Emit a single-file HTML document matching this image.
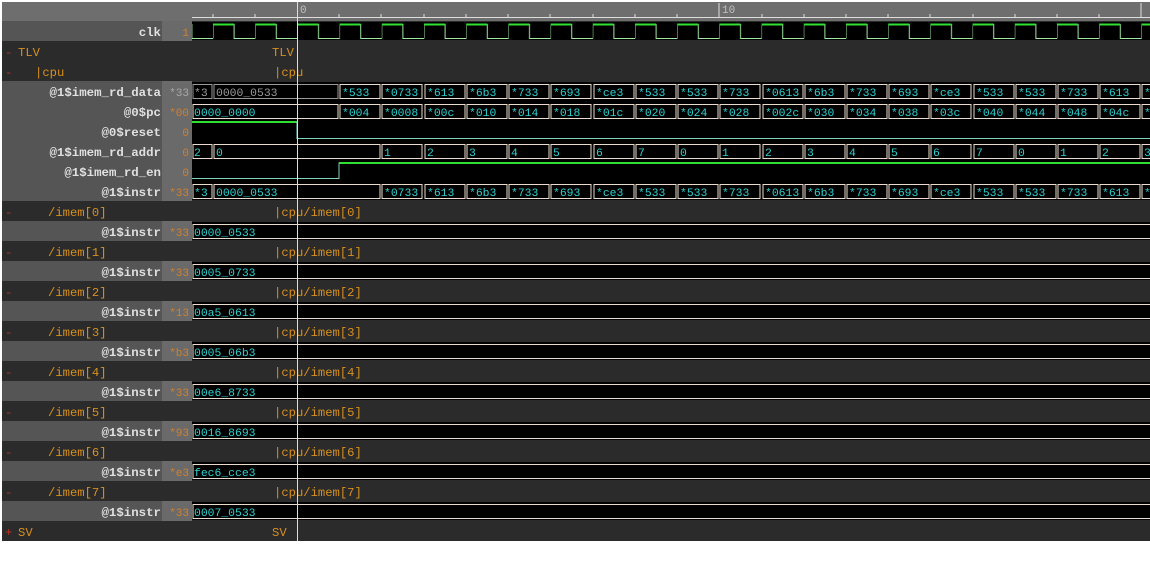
<!DOCTYPE html>
<html><head><meta charset="utf-8"><style>
body{margin:0;background:#fff;width:1150px;height:562px;overflow:hidden}
svg{display:block}
.n{font:bold 12.4px "Liberation Mono",monospace;fill:#e0e0e0;text-anchor:end}
.s{font:12.2px "Liberation Mono",monospace;fill:#d8901c}
.m{fill:#c0c0c0;font:11px "Liberation Mono",monospace}
.v{font:11px "Liberation Mono",monospace;fill:#d08030;text-anchor:end}
.t{font:11.4px "Liberation Mono",monospace;fill:#30d0d0}
.b rect{fill:none;stroke:#eadccc;stroke-width:1}
</style></head><body>
<svg width="1150" height="562" viewBox="0 0 1150 562" xmlns="http://www.w3.org/2000/svg">
<defs>
<pattern id="clk" x="213" y="21" width="42.2" height="20" patternUnits="userSpaceOnUse">
<path d="M0,17.5V3.5H21.1V17.5H42.2" fill="none" stroke="#a0e8a0" stroke-width="1"/>
<path d="M0,3.5H21.1" stroke="#30e030" stroke-width="2"/>
</pattern>
</defs>
<rect x="2" y="2" width="1148" height="539" fill="#2b2b2b"/>
<rect x="2" y="2" width="1148" height="19" fill="#6e6e6e"/>
<line x1="192" y1="17.5" x2="1150" y2="17.5" stroke="#ddd"/>
<g stroke="#ddd">
<line x1="213" y1="14" x2="213" y2="17"/><line x1="255" y1="14" x2="255" y2="17"/><line x1="339" y1="14" x2="339" y2="17"/><line x1="381" y1="14" x2="381" y2="17"/><line x1="424" y1="14" x2="424" y2="17"/><line x1="466" y1="14" x2="466" y2="17"/><line x1="508" y1="14" x2="508" y2="17"/><line x1="550" y1="14" x2="550" y2="17"/><line x1="593" y1="14" x2="593" y2="17"/><line x1="635" y1="14" x2="635" y2="17"/><line x1="677" y1="14" x2="677" y2="17"/><line x1="719" y1="3" x2="719" y2="17"/><line x1="762" y1="14" x2="762" y2="17"/><line x1="804" y1="14" x2="804" y2="17"/><line x1="846" y1="14" x2="846" y2="17"/><line x1="888" y1="14" x2="888" y2="17"/><line x1="930" y1="14" x2="930" y2="17"/><line x1="973" y1="14" x2="973" y2="17"/><line x1="1015" y1="14" x2="1015" y2="17"/><line x1="1057" y1="14" x2="1057" y2="17"/><line x1="1099" y1="14" x2="1099" y2="17"/><line x1="1141" y1="3" x2="1141" y2="17"/>
</g>
<text x="300" y="13" class="m">0</text><text x="722" y="13" class="m">10</text>
<g fill="#555">
<rect x="2" y="21" width="160" height="20"/><rect x="2" y="81" width="160" height="120"/>
<rect x="2" y="221" width="160" height="20"/><rect x="2" y="261" width="160" height="20"/><rect x="2" y="301" width="160" height="20"/><rect x="2" y="341" width="160" height="20"/><rect x="2" y="381" width="160" height="20"/><rect x="2" y="421" width="160" height="20"/><rect x="2" y="461" width="160" height="20"/><rect x="2" y="501" width="160" height="20"/>
</g>
<g fill="#6a6a6a">
<rect x="162" y="21" width="30" height="20"/><rect x="162" y="81" width="30" height="120"/>
<rect x="162" y="221" width="30" height="20"/><rect x="162" y="261" width="30" height="20"/><rect x="162" y="301" width="30" height="20"/><rect x="162" y="341" width="30" height="20"/><rect x="162" y="381" width="30" height="20"/><rect x="162" y="421" width="30" height="20"/><rect x="162" y="461" width="30" height="20"/><rect x="162" y="501" width="30" height="20"/>
</g>
<g fill="#000">
<rect x="192" y="22" width="958" height="18"/><rect x="192" y="82" width="958" height="118"/>
<rect x="192" y="222" width="958" height="18"/><rect x="192" y="262" width="958" height="18"/><rect x="192" y="302" width="958" height="18"/><rect x="192" y="342" width="958" height="18"/><rect x="192" y="382" width="958" height="18"/><rect x="192" y="422" width="958" height="18"/><rect x="192" y="462" width="958" height="18"/><rect x="192" y="502" width="958" height="18"/>
</g>
<text x="161" y="36" class="n">clk</text>
<text x="161" y="96" class="n">@1$imem_rd_data</text>
<text x="161" y="116" class="n">@0$pc</text>
<text x="161" y="136" class="n">@0$reset</text>
<text x="161" y="156" class="n">@1$imem_rd_addr</text>
<text x="161" y="176" class="n">@1$imem_rd_en</text>
<text x="161" y="196" class="n">@1$instr</text>
<text x="161" y="236" class="n">@1$instr</text><text x="161" y="276" class="n">@1$instr</text><text x="161" y="316" class="n">@1$instr</text><text x="161" y="356" class="n">@1$instr</text><text x="161" y="396" class="n">@1$instr</text><text x="161" y="436" class="n">@1$instr</text><text x="161" y="476" class="n">@1$instr</text><text x="161" y="516" class="n">@1$instr</text>
<text x="189" y="36" class="v">1</text><text x="189" y="96" class="v" fill="#aaa" style="fill:#a8a8a8">*33</text><text x="189" y="116" class="v">*00</text><text x="189" y="136" class="v">0</text><text x="189" y="156" class="v">0</text><text x="189" y="176" class="v">0</text><text x="189" y="196" class="v">*33</text>
<text x="189" y="236" class="v">*33</text><text x="189" y="276" class="v">*33</text><text x="189" y="316" class="v">*13</text><text x="189" y="356" class="v">*b3</text><text x="189" y="396" class="v">*33</text><text x="189" y="436" class="v">*93</text><text x="189" y="476" class="v">*e3</text><text x="189" y="516" class="v">*33</text>
<g class="s">
<text x="5" y="56" fill="#c03020">-</text><text x="18" y="56">TLV</text><text x="272" y="56">TLV</text>
<text x="5" y="76" fill="#c03020">-</text><text x="35" y="76">|cpu</text><text x="274" y="76">|cpu</text>
<text x="5" y="216" fill="#c03020">-</text><text x="48" y="216">/imem[0]</text><text x="274" y="216">|cpu/imem[0]</text>
<text x="5" y="256" fill="#c03020">-</text><text x="48" y="256">/imem[1]</text><text x="274" y="256">|cpu/imem[1]</text>
<text x="5" y="296" fill="#c03020">-</text><text x="48" y="296">/imem[2]</text><text x="274" y="296">|cpu/imem[2]</text>
<text x="5" y="336" fill="#c03020">-</text><text x="48" y="336">/imem[3]</text><text x="274" y="336">|cpu/imem[3]</text>
<text x="5" y="376" fill="#c03020">-</text><text x="48" y="376">/imem[4]</text><text x="274" y="376">|cpu/imem[4]</text>
<text x="5" y="416" fill="#c03020">-</text><text x="48" y="416">/imem[5]</text><text x="274" y="416">|cpu/imem[5]</text>
<text x="5" y="456" fill="#c03020">-</text><text x="48" y="456">/imem[6]</text><text x="274" y="456">|cpu/imem[6]</text>
<text x="5" y="496" fill="#c03020">-</text><text x="48" y="496">/imem[7]</text><text x="274" y="496">|cpu/imem[7]</text>
<text x="5" y="536" fill="#c03020">+</text><text x="18" y="536">SV</text><text x="272" y="536">SV</text>
</g>
<rect x="192" y="21" width="958" height="20" fill="url(#clk)"/>
<path d="M192,38.5H213" stroke="#a0e8a0"/>
<path d="M192,122H297" stroke="#30e030" stroke-width="2"/><path d="M297,122V138.5H1150" stroke="#80d0c0" fill="none"/>
<path d="M192,178.5H339V163H1150" stroke="#80d0c0" fill="none"/><path d="M339,163H1150" stroke="#30e030" stroke-width="2"/>
<g class="b">
<rect x="193" y="84.5" width="19" height="14" style="stroke:#999"/><rect x="214" y="84.5" width="124" height="14" style="stroke:#999"/>
<rect x="340" y="84.5" width="40" height="14"/><rect x="382" y="84.5" width="40" height="14"/><rect x="425" y="84.5" width="40" height="14"/><rect x="467" y="84.5" width="40" height="14"/><rect x="509" y="84.5" width="40" height="14"/><rect x="551" y="84.5" width="40" height="14"/><rect x="594" y="84.5" width="40" height="14"/><rect x="636" y="84.5" width="40" height="14"/><rect x="678" y="84.5" width="40" height="14"/><rect x="720" y="84.5" width="40" height="14"/><rect x="763" y="84.5" width="40" height="14"/><rect x="805" y="84.5" width="40" height="14"/><rect x="847" y="84.5" width="40" height="14"/><rect x="889" y="84.5" width="40" height="14"/><rect x="931" y="84.5" width="40" height="14"/><rect x="974" y="84.5" width="40" height="14"/><rect x="1016" y="84.5" width="40" height="14"/><rect x="1058" y="84.5" width="40" height="14"/><rect x="1100" y="84.5" width="40" height="14"/><rect x="1142" y="84.5" width="20" height="14"/>
<rect x="193" y="104.5" width="145" height="14"/>
<rect x="340" y="104.5" width="40" height="14"/><rect x="382" y="104.5" width="40" height="14"/><rect x="425" y="104.5" width="40" height="14"/><rect x="467" y="104.5" width="40" height="14"/><rect x="509" y="104.5" width="40" height="14"/><rect x="551" y="104.5" width="40" height="14"/><rect x="594" y="104.5" width="40" height="14"/><rect x="636" y="104.5" width="40" height="14"/><rect x="678" y="104.5" width="40" height="14"/><rect x="720" y="104.5" width="40" height="14"/><rect x="763" y="104.5" width="40" height="14"/><rect x="805" y="104.5" width="40" height="14"/><rect x="847" y="104.5" width="40" height="14"/><rect x="889" y="104.5" width="40" height="14"/><rect x="931" y="104.5" width="40" height="14"/><rect x="974" y="104.5" width="40" height="14"/><rect x="1016" y="104.5" width="40" height="14"/><rect x="1058" y="104.5" width="40" height="14"/><rect x="1100" y="104.5" width="40" height="14"/><rect x="1142" y="104.5" width="20" height="14"/>
<rect x="193" y="144.5" width="19" height="14"/><rect x="214" y="144.5" width="166" height="14"/>
<rect x="382" y="144.5" width="40" height="14"/><rect x="425" y="144.5" width="40" height="14"/><rect x="467" y="144.5" width="40" height="14"/><rect x="509" y="144.5" width="40" height="14"/><rect x="551" y="144.5" width="40" height="14"/><rect x="594" y="144.5" width="40" height="14"/><rect x="636" y="144.5" width="40" height="14"/><rect x="678" y="144.5" width="40" height="14"/><rect x="720" y="144.5" width="40" height="14"/><rect x="763" y="144.5" width="40" height="14"/><rect x="805" y="144.5" width="40" height="14"/><rect x="847" y="144.5" width="40" height="14"/><rect x="889" y="144.5" width="40" height="14"/><rect x="931" y="144.5" width="40" height="14"/><rect x="974" y="144.5" width="40" height="14"/><rect x="1016" y="144.5" width="40" height="14"/><rect x="1058" y="144.5" width="40" height="14"/><rect x="1100" y="144.5" width="40" height="14"/><rect x="1142" y="144.5" width="20" height="14"/>
<rect x="193" y="184.5" width="19" height="14"/><rect x="214" y="184.5" width="166" height="14"/>
<rect x="382" y="184.5" width="40" height="14"/><rect x="425" y="184.5" width="40" height="14"/><rect x="467" y="184.5" width="40" height="14"/><rect x="509" y="184.5" width="40" height="14"/><rect x="551" y="184.5" width="40" height="14"/><rect x="594" y="184.5" width="40" height="14"/><rect x="636" y="184.5" width="40" height="14"/><rect x="678" y="184.5" width="40" height="14"/><rect x="720" y="184.5" width="40" height="14"/><rect x="763" y="184.5" width="40" height="14"/><rect x="805" y="184.5" width="40" height="14"/><rect x="847" y="184.5" width="40" height="14"/><rect x="889" y="184.5" width="40" height="14"/><rect x="931" y="184.5" width="40" height="14"/><rect x="974" y="184.5" width="40" height="14"/><rect x="1016" y="184.5" width="40" height="14"/><rect x="1058" y="184.5" width="40" height="14"/><rect x="1100" y="184.5" width="40" height="14"/><rect x="1142" y="184.5" width="20" height="14"/>
<rect x="193" y="224.5" width="970" height="14"/><rect x="193" y="264.5" width="970" height="14"/><rect x="193" y="304.5" width="970" height="14"/><rect x="193" y="344.5" width="970" height="14"/><rect x="193" y="384.5" width="970" height="14"/><rect x="193" y="424.5" width="970" height="14"/><rect x="193" y="464.5" width="970" height="14"/><rect x="193" y="504.5" width="970" height="14"/>
</g>
<g class="t">
<text x="194" y="96" fill="#999">*3</text><text x="216" y="96" fill="#999">0000_0533</text>
<text x="342" y="96">*533</text><text x="384" y="96">*0733</text><text x="427" y="96">*613</text><text x="469" y="96">*6b3</text><text x="511" y="96">*733</text><text x="553" y="96">*693</text><text x="596" y="96">*ce3</text><text x="638" y="96">*533</text><text x="680" y="96">*533</text><text x="722" y="96">*733</text><text x="765" y="96">*0613</text><text x="807" y="96">*6b3</text><text x="849" y="96">*733</text><text x="891" y="96">*693</text><text x="933" y="96">*ce3</text><text x="976" y="96">*533</text><text x="1018" y="96">*533</text><text x="1060" y="96">*733</text><text x="1102" y="96">*613</text><text x="1144" y="96">*</text>
<text x="194" y="116">0000_0000</text>
<text x="342" y="116">*004</text><text x="384" y="116">*0008</text><text x="427" y="116">*00c</text><text x="469" y="116">*010</text><text x="511" y="116">*014</text><text x="553" y="116">*018</text><text x="596" y="116">*01c</text><text x="638" y="116">*020</text><text x="680" y="116">*024</text><text x="722" y="116">*028</text><text x="765" y="116">*002c</text><text x="807" y="116">*030</text><text x="849" y="116">*034</text><text x="891" y="116">*038</text><text x="933" y="116">*03c</text><text x="976" y="116">*040</text><text x="1018" y="116">*044</text><text x="1060" y="116">*048</text><text x="1102" y="116">*04c</text><text x="1144" y="116">*</text>
<text x="194" y="156">2</text><text x="216" y="156">0</text>
<text x="384" y="156">1</text><text x="427" y="156">2</text><text x="469" y="156">3</text><text x="511" y="156">4</text><text x="553" y="156">5</text><text x="596" y="156">6</text><text x="638" y="156">7</text><text x="680" y="156">0</text><text x="722" y="156">1</text><text x="765" y="156">2</text><text x="807" y="156">3</text><text x="849" y="156">4</text><text x="891" y="156">5</text><text x="933" y="156">6</text><text x="976" y="156">7</text><text x="1018" y="156">0</text><text x="1060" y="156">1</text><text x="1102" y="156">2</text><text x="1144" y="156">3</text>
<text x="194" y="196">*3</text><text x="216" y="196">0000_0533</text>
<text x="384" y="196">*0733</text><text x="427" y="196">*613</text><text x="469" y="196">*6b3</text><text x="511" y="196">*733</text><text x="553" y="196">*693</text><text x="596" y="196">*ce3</text><text x="638" y="196">*533</text><text x="680" y="196">*533</text><text x="722" y="196">*733</text><text x="765" y="196">*0613</text><text x="807" y="196">*6b3</text><text x="849" y="196">*733</text><text x="891" y="196">*693</text><text x="933" y="196">*ce3</text><text x="976" y="196">*533</text><text x="1018" y="196">*533</text><text x="1060" y="196">*733</text><text x="1102" y="196">*613</text><text x="1144" y="196">*</text>
<text x="194" y="236">0000_0533</text><text x="194" y="276">0005_0733</text><text x="194" y="316">00a5_0613</text><text x="194" y="356">0005_06b3</text><text x="194" y="396">00e6_8733</text><text x="194" y="436">0016_8693</text><text x="194" y="476">fec6_cce3</text><text x="194" y="516">0007_0533</text>
</g>
<line x1="297.5" y1="2" x2="297.5" y2="541" stroke="#eadcc0"/>
</svg>
</body></html>
